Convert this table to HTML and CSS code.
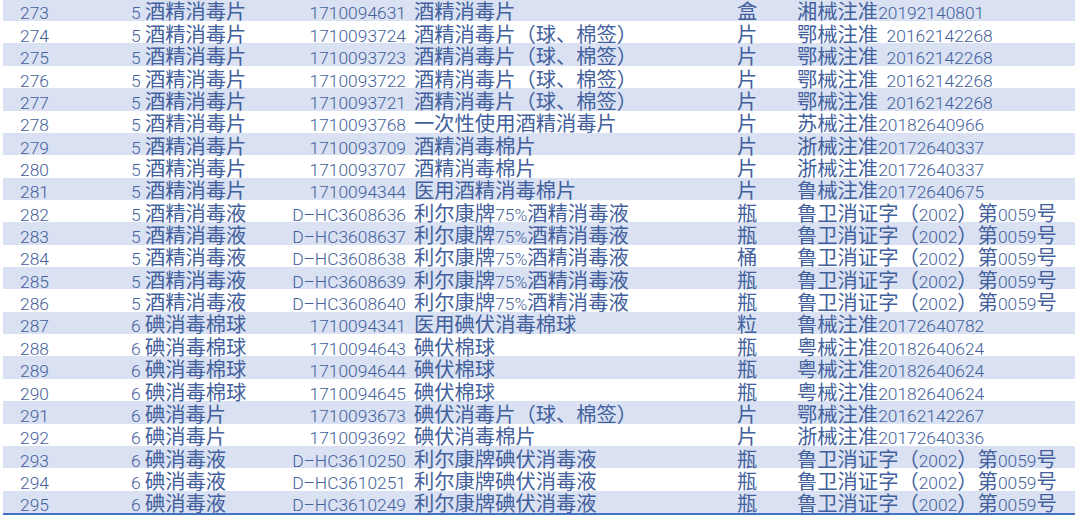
FILE: index.html
```html
<!DOCTYPE html>
<html lang="zh-CN">
<head>
<meta charset="utf-8">
<title>消毒用品目录</title>
<link rel="stylesheet" href="styles.css">
</head>
<body>
<div class="table">
  <div class="row"><div class="c no"><span class="n">273</span></div><div class="c"><span class="n">5 </span>酒精消毒片</div><div class="c code"><span class="n">1710094631</span></div><div class="c name">酒精消毒片</div><div class="c">盒</div><div class="c">湘械注准<span class="n">20192140801</span></div></div>
  <div class="row"><div class="c no"><span class="n">274</span></div><div class="c"><span class="n">5 </span>酒精消毒片</div><div class="c code"><span class="n">1710093724</span></div><div class="c name">酒精消毒片（球、棉签）</div><div class="c">片</div><div class="c">鄂械注准<span class="n">  20162142268</span></div></div>
  <div class="row"><div class="c no"><span class="n">275</span></div><div class="c"><span class="n">5 </span>酒精消毒片</div><div class="c code"><span class="n">1710093723</span></div><div class="c name">酒精消毒片（球、棉签）</div><div class="c">片</div><div class="c">鄂械注准<span class="n">  20162142268</span></div></div>
  <div class="row"><div class="c no"><span class="n">276</span></div><div class="c"><span class="n">5 </span>酒精消毒片</div><div class="c code"><span class="n">1710093722</span></div><div class="c name">酒精消毒片（球、棉签）</div><div class="c">片</div><div class="c">鄂械注准<span class="n">  20162142268</span></div></div>
  <div class="row"><div class="c no"><span class="n">277</span></div><div class="c"><span class="n">5 </span>酒精消毒片</div><div class="c code"><span class="n">1710093721</span></div><div class="c name">酒精消毒片（球、棉签）</div><div class="c">片</div><div class="c">鄂械注准<span class="n">  20162142268</span></div></div>
  <div class="row"><div class="c no"><span class="n">278</span></div><div class="c"><span class="n">5 </span>酒精消毒片</div><div class="c code"><span class="n">1710093768</span></div><div class="c name">一次性使用酒精消毒片</div><div class="c">片</div><div class="c">苏械注准<span class="n">20182640966</span></div></div>
  <div class="row"><div class="c no"><span class="n">279</span></div><div class="c"><span class="n">5 </span>酒精消毒片</div><div class="c code"><span class="n">1710093709</span></div><div class="c name">酒精消毒棉片</div><div class="c">片</div><div class="c">浙械注准<span class="n">20172640337</span></div></div>
  <div class="row"><div class="c no"><span class="n">280</span></div><div class="c"><span class="n">5 </span>酒精消毒片</div><div class="c code"><span class="n">1710093707</span></div><div class="c name">酒精消毒棉片</div><div class="c">片</div><div class="c">浙械注准<span class="n">20172640337</span></div></div>
  <div class="row"><div class="c no"><span class="n">281</span></div><div class="c"><span class="n">5 </span>酒精消毒片</div><div class="c code"><span class="n">1710094344</span></div><div class="c name">医用酒精消毒棉片</div><div class="c">片</div><div class="c">鲁械注准<span class="n">20172640675</span></div></div>
  <div class="row"><div class="c no"><span class="n">282</span></div><div class="c"><span class="n">5 </span>酒精消毒液</div><div class="c code"><span class="n">D–HC3608636</span></div><div class="c name">利尔康牌<span class="n">75%</span>酒精消毒液</div><div class="c">瓶</div><div class="c">鲁卫消证字（<span class="n">2002</span>）第<span class="n">0059</span>号</div></div>
  <div class="row"><div class="c no"><span class="n">283</span></div><div class="c"><span class="n">5 </span>酒精消毒液</div><div class="c code"><span class="n">D–HC3608637</span></div><div class="c name">利尔康牌<span class="n">75%</span>酒精消毒液</div><div class="c">瓶</div><div class="c">鲁卫消证字（<span class="n">2002</span>）第<span class="n">0059</span>号</div></div>
  <div class="row"><div class="c no"><span class="n">284</span></div><div class="c"><span class="n">5 </span>酒精消毒液</div><div class="c code"><span class="n">D–HC3608638</span></div><div class="c name">利尔康牌<span class="n">75%</span>酒精消毒液</div><div class="c">桶</div><div class="c">鲁卫消证字（<span class="n">2002</span>）第<span class="n">0059</span>号</div></div>
  <div class="row"><div class="c no"><span class="n">285</span></div><div class="c"><span class="n">5 </span>酒精消毒液</div><div class="c code"><span class="n">D–HC3608639</span></div><div class="c name">利尔康牌<span class="n">75%</span>酒精消毒液</div><div class="c">瓶</div><div class="c">鲁卫消证字（<span class="n">2002</span>）第<span class="n">0059</span>号</div></div>
  <div class="row"><div class="c no"><span class="n">286</span></div><div class="c"><span class="n">5 </span>酒精消毒液</div><div class="c code"><span class="n">D–HC3608640</span></div><div class="c name">利尔康牌<span class="n">75%</span>酒精消毒液</div><div class="c">瓶</div><div class="c">鲁卫消证字（<span class="n">2002</span>）第<span class="n">0059</span>号</div></div>
  <div class="row"><div class="c no"><span class="n">287</span></div><div class="c"><span class="n">6 </span>碘消毒棉球</div><div class="c code"><span class="n">1710094341</span></div><div class="c name">医用碘伏消毒棉球</div><div class="c">粒</div><div class="c">鲁械注准<span class="n">20172640782</span></div></div>
  <div class="row"><div class="c no"><span class="n">288</span></div><div class="c"><span class="n">6 </span>碘消毒棉球</div><div class="c code"><span class="n">1710094643</span></div><div class="c name">碘伏棉球</div><div class="c">瓶</div><div class="c">粤械注准<span class="n">20182640624</span></div></div>
  <div class="row"><div class="c no"><span class="n">289</span></div><div class="c"><span class="n">6 </span>碘消毒棉球</div><div class="c code"><span class="n">1710094644</span></div><div class="c name">碘伏棉球</div><div class="c">瓶</div><div class="c">粤械注准<span class="n">20182640624</span></div></div>
  <div class="row"><div class="c no"><span class="n">290</span></div><div class="c"><span class="n">6 </span>碘消毒棉球</div><div class="c code"><span class="n">1710094645</span></div><div class="c name">碘伏棉球</div><div class="c">瓶</div><div class="c">粤械注准<span class="n">20182640624</span></div></div>
  <div class="row"><div class="c no"><span class="n">291</span></div><div class="c"><span class="n">6 </span>碘消毒片</div><div class="c code"><span class="n">1710093673</span></div><div class="c name">碘伏消毒片（球、棉签）</div><div class="c">片</div><div class="c">鄂械注准<span class="n">20162142267</span></div></div>
  <div class="row"><div class="c no"><span class="n">292</span></div><div class="c"><span class="n">6 </span>碘消毒片</div><div class="c code"><span class="n">1710093692</span></div><div class="c name">碘伏消毒棉片</div><div class="c">片</div><div class="c">浙械注准<span class="n">20172640336</span></div></div>
  <div class="row"><div class="c no"><span class="n">293</span></div><div class="c"><span class="n">6 </span>碘消毒液</div><div class="c code"><span class="n">D–HC3610250</span></div><div class="c name">利尔康牌碘伏消毒液</div><div class="c">瓶</div><div class="c">鲁卫消证字（<span class="n">2002</span>）第<span class="n">0059</span>号</div></div>
  <div class="row"><div class="c no"><span class="n">294</span></div><div class="c"><span class="n">6 </span>碘消毒液</div><div class="c code"><span class="n">D–HC3610251</span></div><div class="c name">利尔康牌碘伏消毒液</div><div class="c">瓶</div><div class="c">鲁卫消证字（<span class="n">2002</span>）第<span class="n">0059</span>号</div></div>
  <div class="row"><div class="c no"><span class="n">295</span></div><div class="c"><span class="n">6 </span>碘消毒液</div><div class="c code"><span class="n">D–HC3610249</span></div><div class="c name">利尔康牌碘伏消毒液</div><div class="c">瓶</div><div class="c">鲁卫消证字（<span class="n">2002</span>）第<span class="n">0059</span>号</div></div>
</div>
</body>
</html>
```

FILE: styles.css
```css
html, body {
  margin: 0;
  padding: 0;
  background: #ffffff;
}

body {
  font-family: "Noto Sans CJK SC", "Noto Sans", sans-serif;
  font-size: 20.3px;
  color: #42609c;
}

.table {
  margin-top: -1.3px;
  margin-left: 3px;
  width: 1072px;
  border-bottom: 2px solid #4472c4;
}

.row {
  display: grid;
  grid-template-columns: 128px 152px 123px 331px 60px 1fr;
  height: 22.36px;
}

.row:nth-child(odd) {
  background: #d9e1f2;
}

.c {
  box-sizing: border-box;
  white-space: pre;
  line-height: 20.6px;
  height: 22.36px;
  padding-top: 1.76px;
  overflow: visible;
}

.no {
  padding-left: 17px;
}

.code {
  text-align: right;
}

.name {
  padding-left: 8px;
}

.n {
  font-family: Roboto, "Liberation Sans", sans-serif;
  font-weight: 300;
  font-size: 17.4px;
  line-height: 1;
  vertical-align: 0.2px;
}
```
